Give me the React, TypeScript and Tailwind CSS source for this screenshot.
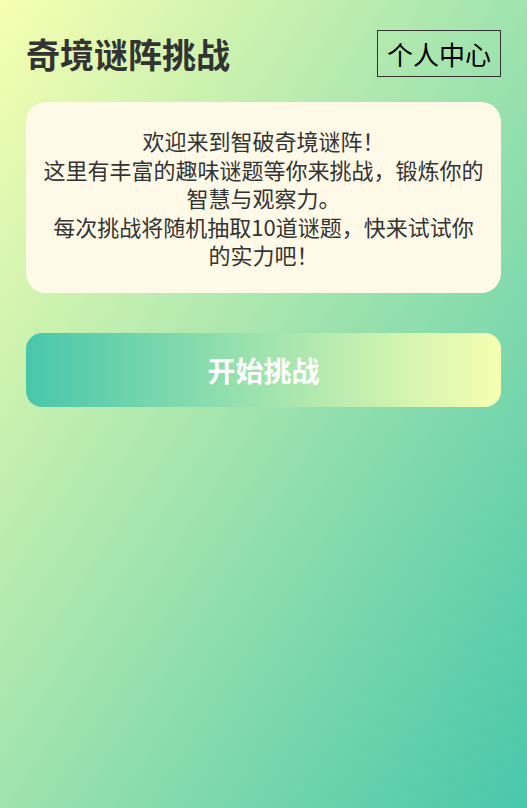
export default function App() {
  return (
    <div className="min-h-screen w-full bg-[linear-gradient(to_bottom_right,#f6ffb1,#48c7ab)] px-[26px] pt-[30px] font-['Noto_Sans_CJK_SC','Noto_Sans',sans-serif] text-[#333]">
      <header className="flex items-center justify-between">
        <h1 className="text-[34px] font-bold leading-[47px]">奇境谜阵挑战</h1>
        <button className="border border-[#333] px-[9px] py-[4px] text-[26px] leading-[37px] text-black">
          个人中心
        </button>
      </header>

      <div className="mt-[25px] rounded-[20px] bg-[#fffae8] px-4 py-6 text-center text-[22px] leading-[1.3]">
        <p>欢迎来到智破奇境谜阵！</p>
        <p>
          这里有丰富的趣味谜题等你来挑战，锻炼你的
          <br />
          智慧与观察力。
        </p>
        <p>
          每次挑战将随机抽取10道谜题，快来试试你
          <br />
          的实力吧！
        </p>
      </div>

      <button className="mt-10 flex h-[74px] w-full items-center justify-center rounded-2xl bg-[linear-gradient(to_right,#48c7ab,#f6ffb1)] text-[28px] font-bold text-white">
        开始挑战
      </button>
    </div>
  );
}
